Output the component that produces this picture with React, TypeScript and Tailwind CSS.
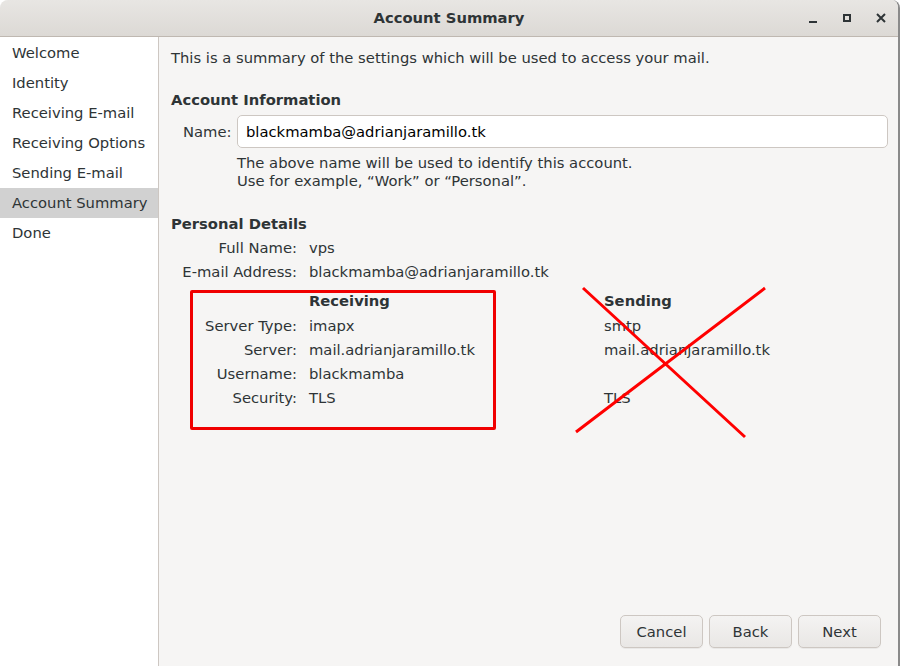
import React from "react";

const steps = [
  "Welcome",
  "Identity",
  "Receiving E-mail",
  "Receiving Options",
  "Sending E-mail",
  "Account Summary",
  "Done",
];

const rows: [string, string, string][] = [
  ["Server Type:", "imapx", "smtp"],
  ["Server:", "mail.adrianjaramillo.tk", "mail.adrianjaramillo.tk"],
  ["Username:", "blackmamba", ""],
  ["Security:", "TLS", "TLS"],
];

function WinButton({ children }: { children: React.ReactNode }) {
  return <div className="w-[34px] h-[36px] flex items-center justify-center">{children}</div>;
}

function Btn({ label }: { label: string }) {
  return (
    <button className="w-[83px] h-[33px] rounded-[5px] border border-[#cdc7c2] bg-gradient-to-b from-[#f4f3f2] to-[#e9e7e5] text-[#2e3436] shadow-[0_1px_0_rgba(0,0,0,0.05)]">
      {label}
    </button>
  );
}

export default function App() {
  return (
    <div
      className="w-[900px] h-[666px] flex flex-col bg-[#f6f5f4] text-[#2e3436] text-[14.75px] leading-[18px] overflow-hidden rounded-t-[8px] border-r-2 border-[#8a8a8a]"
      style={{ fontFamily: '"DejaVu Sans", sans-serif' }}
    >
      {/* Title bar */}
      <div className="h-[37px] shrink-0 flex items-center bg-gradient-to-b from-[#e8e6e3] to-[#dcd9d5] border-b border-[#bfb8b1] relative">
        <div className="flex-1 text-center font-bold text-[#2e3436]">Account Summary</div>
        <div className="absolute right-0 top-0 flex">
          <WinButton>
            <div className="w-[8px] h-[2px] bg-[#2e3436] mt-[7px]" />
          </WinButton>
          <WinButton>
            <div className="w-[8px] h-[8px] border-2 border-[#2e3436]" />
          </WinButton>
          <WinButton>
            <svg width="10" height="10" viewBox="0 0 10 10">
              <path d="M1 1L9 9M9 1L1 9" stroke="#2e3436" strokeWidth="2" />
            </svg>
          </WinButton>
        </div>
      </div>

      <div className="flex flex-1 min-h-0">
        {/* Sidebar */}
        <div className="w-[159px] shrink-0 bg-white border-r border-[#cdc7c2] pt-[1px]">
          {steps.map((s) => (
            <div
              key={s}
              className={`h-[30px] flex items-center pl-[12px] whitespace-nowrap ${s === "Account Summary" ? "bg-[#d1d1d1]" : ""}`}
            >
              {s}
            </div>
          ))}
        </div>

        {/* Main */}
        <div className="flex-1 flex flex-col pl-[12px] pr-[10px] pt-[12px] relative">
          <div className="whitespace-nowrap">This is a summary of the settings which will be used to access your mail.</div>

          <div className="font-bold mt-[24px]">Account Information</div>
          <div className="flex items-center mt-[6px] pl-[12px]">
            <span className="w-[48px] text-right">Name:</span>
            <div className="ml-[6px] flex-1 h-[33px] bg-white border border-[#cdc7c2] rounded-[5px] flex items-center pl-[8px] text-[#000]">
              blackmamba@adrianjaramillo.tk
            </div>
          </div>
          <div className="pl-[66px] mt-[6px]">
            <div>The above name will be used to identify this account.</div>
            <div>Use for example, “Work” or “Personal”.</div>
          </div>

          <div className="font-bold mt-[25px]">Personal Details</div>
          <div className="grid grid-cols-[118px_283px_1fr] grid-rows-[24px_24px_30px_24px_24px_24px_24px] gap-x-[12px] pl-[8px] mt-[3px] items-center">
            <div className="text-right whitespace-nowrap">Full Name:</div>
            <div>vps</div>
            <div />
            <div className="text-right whitespace-nowrap">E-mail Address:</div>
            <div className="col-span-2 whitespace-nowrap">blackmamba@adrianjaramillo.tk</div>
            <div />
            <div className="font-bold self-end pb-[4px]">Receiving</div>
            <div className="font-bold self-end pb-[4px]">Sending</div>
            {rows.map(([l, r, s]) => (
              <React.Fragment key={l}>
                <div className="text-right whitespace-nowrap">{l}</div>
                <div className="whitespace-nowrap">{r}</div>
                <div className="whitespace-nowrap">{s}</div>
              </React.Fragment>
            ))}
          </div>

          <div className="flex-1" />
          <div className="flex justify-end gap-[6px] pb-[18px] pr-[7px]">
            <Btn label="Cancel" />
            <Btn label="Back" />
            <Btn label="Next" />
          </div>

          {/* Annotations */}
          <div className="absolute left-[31px] top-[253px] w-[306px] h-[140px] border-[3px] border-[#f00000] rounded-[2px] pointer-events-none" />
          <svg className="absolute left-0 top-0 pointer-events-none" width="740" height="629">
            <path d="M424 251L586 400M606 251L417 395" stroke="#ff0000" strokeWidth="3" fill="none" />
          </svg>
        </div>
      </div>
    </div>
  );
}
